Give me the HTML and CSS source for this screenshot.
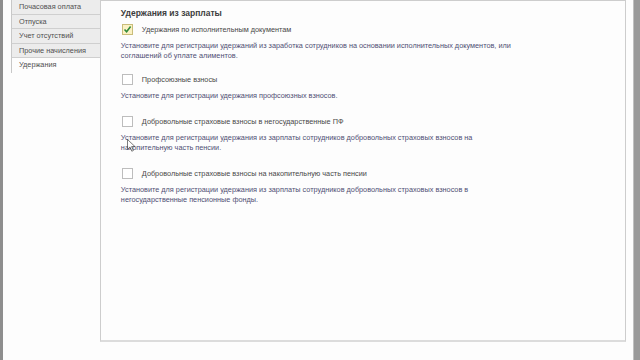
FILE: index.html
```html
<!DOCTYPE html>
<html lang="ru">
<head>
<meta charset="utf-8">
<link rel="stylesheet" href="styles.css">
</head>
<body>
<div class="frame">
  <div class="leftbar"></div>
  <div class="tabs">
    <div class="tab">Почасовая оплата</div>
    <div class="tab">Отпуска</div>
    <div class="tab">Учет отсутствий</div>
    <div class="tab">Прочие начисления</div>
    <div class="tab active">Удержания</div>
  </div>
  <div class="panel">
    <div class="heading">Удержания из зарплаты</div>
    <div class="group first">
      <div class="row"><span class="cb checked"><svg viewBox="0 0 11 11" width="11" height="11"><path d="M2.5 5.5 L4.6 7.8 L8.6 2.6" fill="none" stroke="#2f8a3a" stroke-width="1.6"/></svg></span><span class="label">Удержания по исполнительным документам</span></div>
      <div class="desc">Установите для регистрации удержаний из заработка сотрудников на основании исполнительных документов, или<br>соглашений об уплате алиментов.</div>
    </div>
    <div class="group">
      <div class="row"><span class="cb"></span><span class="label">Профсоюзные взносы</span></div>
      <div class="desc">Установите для регистрации удержания профсоюзных взносов.</div>
    </div>
    <div class="group">
      <div class="row"><span class="cb"></span><span class="label">Добровольные страховые взносы в негосударственные ПФ</span></div>
      <div class="desc">Установите для регистрации удержания из зарплаты сотрудников добровольных страховых взносов на<br>накопительную часть пенсии.</div>
    </div>
    <div class="group">
      <div class="row"><span class="cb"></span><span class="label">Добровольные страховые взносы на накопительную часть пенсии</span></div>
      <div class="desc">Установите для регистрации удержания из зарплаты сотрудников добровольных страховых взносов в<br>негосударственные пенсионные фонды.</div>
    </div>
  </div>
  <div class="gap"></div>
  <div class="rightbar"></div>
</div>
<svg class="cursor" width="9" height="13" viewBox="0 0 9 13"><path d="M0.5 0.5 L0.5 10.5 L3 8.2 L4.8 12.2 L6.4 11.5 L4.7 7.6 L8 7.6 Z" fill="#fff" stroke="#333" stroke-width="0.8" opacity="0.8"/></svg>
</body>
</html>
```

FILE: styles.css
```css
html, body {
  margin: 0;
  padding: 0;
  background: #fdfdfd;
  font-family: "Liberation Sans", Arial, sans-serif;
}
.frame {
  display: flex;
  height: 360px;
  width: 640px;
  position: relative;
}
.leftbar {
  width: 3px;
  background: #8e8e8e;
  margin-right: 8px;
}
.tabs {
  width: 89px;
  display: flex;
  flex-direction: column;
}
.tab {
  height: 14.5px;
  line-height: 13.5px;
  box-sizing: border-box;
  padding-left: 7px;
  font-size: 7.3px;
  color: #505050;
  background: #ececec;
  border-left: 1px solid #c8c8c8;
  border-bottom: 1px solid #cfcfcf;
}
.tab.active {
  background: #fdfdfd;
  border-bottom: none;
  height: 15px;
}
.panel {
  width: 527px;
  height: 342px;
  box-sizing: border-box;
  border: 1px solid #cdcdcd;
  border-bottom: 2px solid #dcdcdc;
  background: #fdfdfd;
  padding: 7px 0 0 20px;
}
.gap {
  width: 7px;
}
.rightbar {
  width: 6px;
  background: #9a9a9a;
  border-left: 1px solid #c0c0c0;
}
.heading {
  font-size: 8.5px;
  font-weight: bold;
  color: #3c3c3c;
  height: 10px;
  line-height: 10px;
  margin-bottom: 5px;
}
.group {
  margin-bottom: 14px;
}
.group.first {
  margin-bottom: 12px;
}
.row {
  display: flex;
  align-items: center;
  height: 12px;
}
.cb {
  width: 11px;
  height: 11px;
  box-sizing: border-box;
  border: 1px solid #bdbdbd;
  background: #fff;
  margin-left: 1px;
  margin-right: 9px;
  display: flex;
}
.cb.checked {
  border-color: #c9bd7a;
  background: #fbf1c4;
}
.cb svg {
  margin: -1px;
}
.label {
  font-size: 7.3px;
  color: #484848;
}
.desc {
  margin-top: 6px;
  font-size: 7.3px;
  line-height: 10px;
  color: #4f4f74;
}
.cursor {
  position: absolute;
  left: 127px;
  top: 139px;
}
```
